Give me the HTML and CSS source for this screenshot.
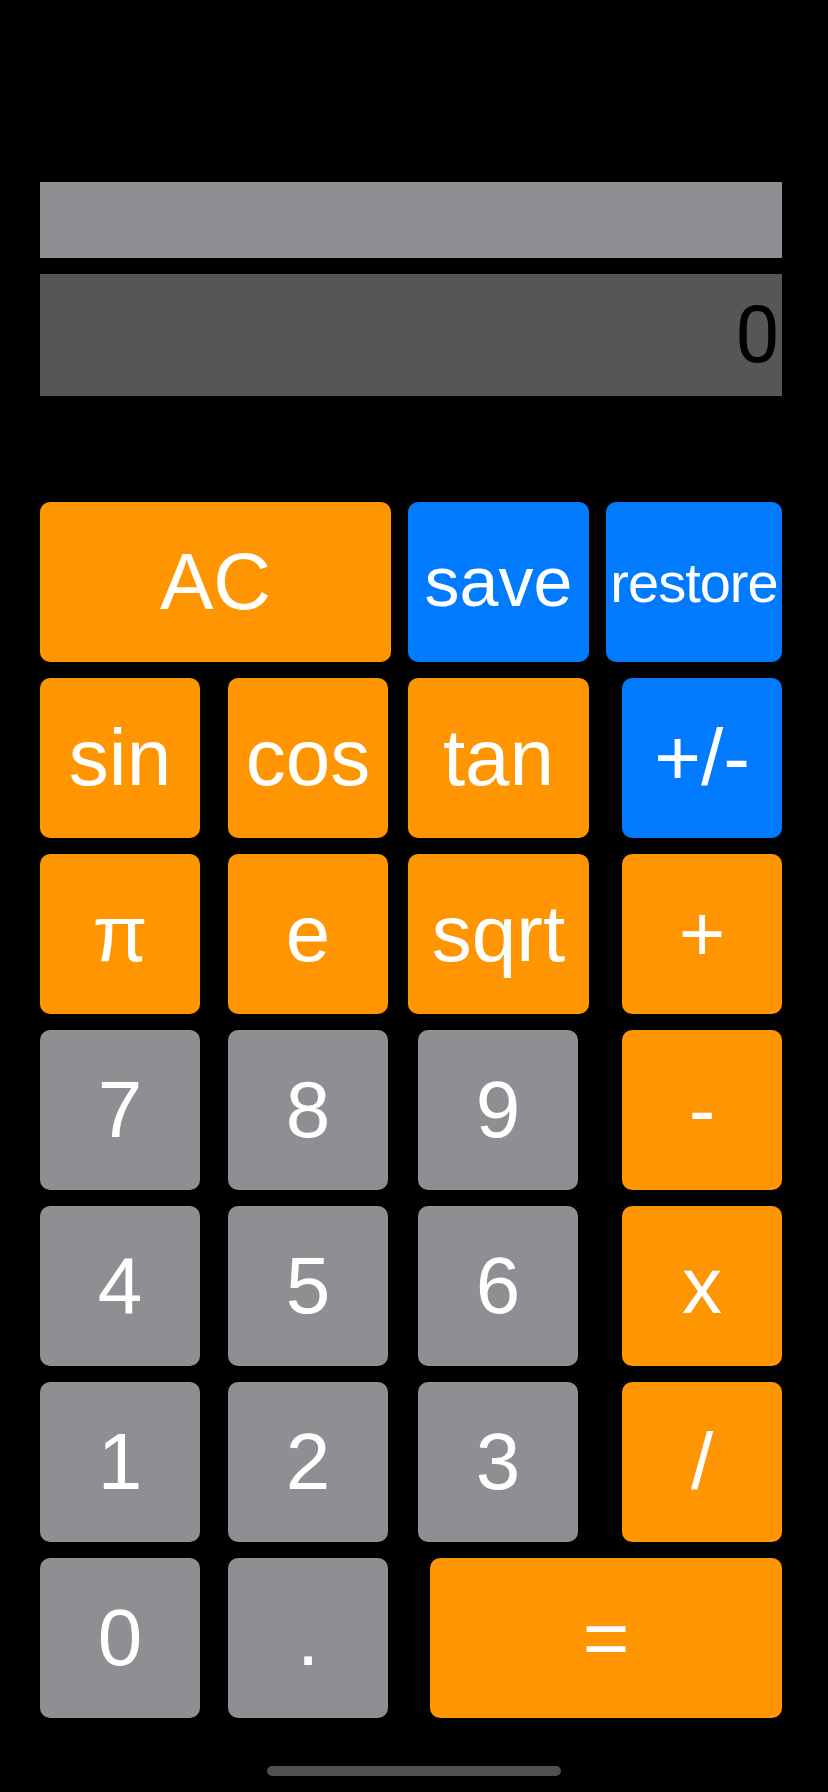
FILE: index.html
```html
<!DOCTYPE html>
<html lang="en">
<head>
<meta charset="utf-8">
<title>Calculator</title>
<link rel="stylesheet" href="styles.css">
</head>
<body>
<div class="screen">
  <div class="history"></div>
  <div class="display"><span class="value">0</span></div>

  <div class="keypad">
    <div class="row">
      <div class="key orange w-ac">AC</div>
      <div class="key blue w-save ml17 shrink-save">save</div>
      <div class="key blue w-restore ml17 shrink-restore">restore</div>
    </div>
    <div class="row">
      <div class="key orange w160">sin</div>
      <div class="key orange w160 ml28">cos</div>
      <div class="key orange w-save ml20">tan</div>
      <div class="key blue w160 ml33">+/-</div>
    </div>
    <div class="row">
      <div class="key orange w160">π</div>
      <div class="key orange w160 ml28">e</div>
      <div class="key orange w-save ml20">sqrt</div>
      <div class="key orange w160 ml33">+</div>
    </div>
    <div class="row">
      <div class="key gray w160">7</div>
      <div class="key gray w160 ml28">8</div>
      <div class="key gray w160 ml30">9</div>
      <div class="key orange w160 ml44">-</div>
    </div>
    <div class="row">
      <div class="key gray w160">4</div>
      <div class="key gray w160 ml28">5</div>
      <div class="key gray w160 ml30">6</div>
      <div class="key orange w160 ml44">x</div>
    </div>
    <div class="row">
      <div class="key gray w160">1</div>
      <div class="key gray w160 ml28">2</div>
      <div class="key gray w160 ml30">3</div>
      <div class="key orange w160 ml44">/</div>
    </div>
    <div class="row">
      <div class="key gray w160">0</div>
      <div class="key gray w160 ml28">.</div>
      <div class="key orange w-eq ml42">=</div>
    </div>
  </div>

  <div class="home-indicator"></div>
</div>
</body>
</html>
```

FILE: styles.css
```css
html, body {
  margin: 0;
  padding: 0;
  background: #000;
}

.screen {
  width: 828px;
  height: 1792px;
  box-sizing: border-box;
  padding: 182px 46px 0 40px;
  display: flex;
  flex-direction: column;
  font-family: "Liberation Sans", Arial, sans-serif;
}

.history {
  height: 76px;
  background: #8e8e93;
}

.display {
  margin-top: 16px;
  height: 122px;
  background: #565656;
  display: flex;
  align-items: center;
  justify-content: flex-end;
  padding-right: 2px;
}

.value {
  font-family: Roboto, "Liberation Sans", sans-serif;
  font-weight: 400;
  font-size: 80px;
  color: #000;
}

.keypad {
  margin-top: 106px;
  display: flex;
  flex-direction: column;
  gap: 16px;
}

.row {
  display: flex;
  height: 160px;
}

.key {
  height: 160px;
  border-radius: 10px;
  display: flex;
  align-items: center;
  justify-content: center;
  color: #fff;
  font-size: 80px;
  white-space: nowrap;
}

.orange { background: #ff9500; }
.blue { background: #007aff; }
.gray { background: #8e8e93; }

.w160 { width: 160px; }
.w-ac { width: 351px; }
.w-save { width: 181px; }
.w-restore { width: 176px; }
.w-eq { width: 352px; }

.ml17 { margin-left: 17px; }
.ml20 { margin-left: 20px; }
.ml28 { margin-left: 28px; }
.ml30 { margin-left: 30px; }
.ml33 { margin-left: 33px; }
.ml42 { margin-left: 42px; }
.ml44 { margin-left: 44px; }

.shrink-save { font-size: 70px; }
.shrink-restore { font-size: 56px; letter-spacing: -1px; }

.home-indicator {
  margin-top: 48px;
  align-self: center;
  width: 294px;
  height: 10px;
  border-radius: 5px;
  background: #505050;
  margin-left: 6px;
}
```
